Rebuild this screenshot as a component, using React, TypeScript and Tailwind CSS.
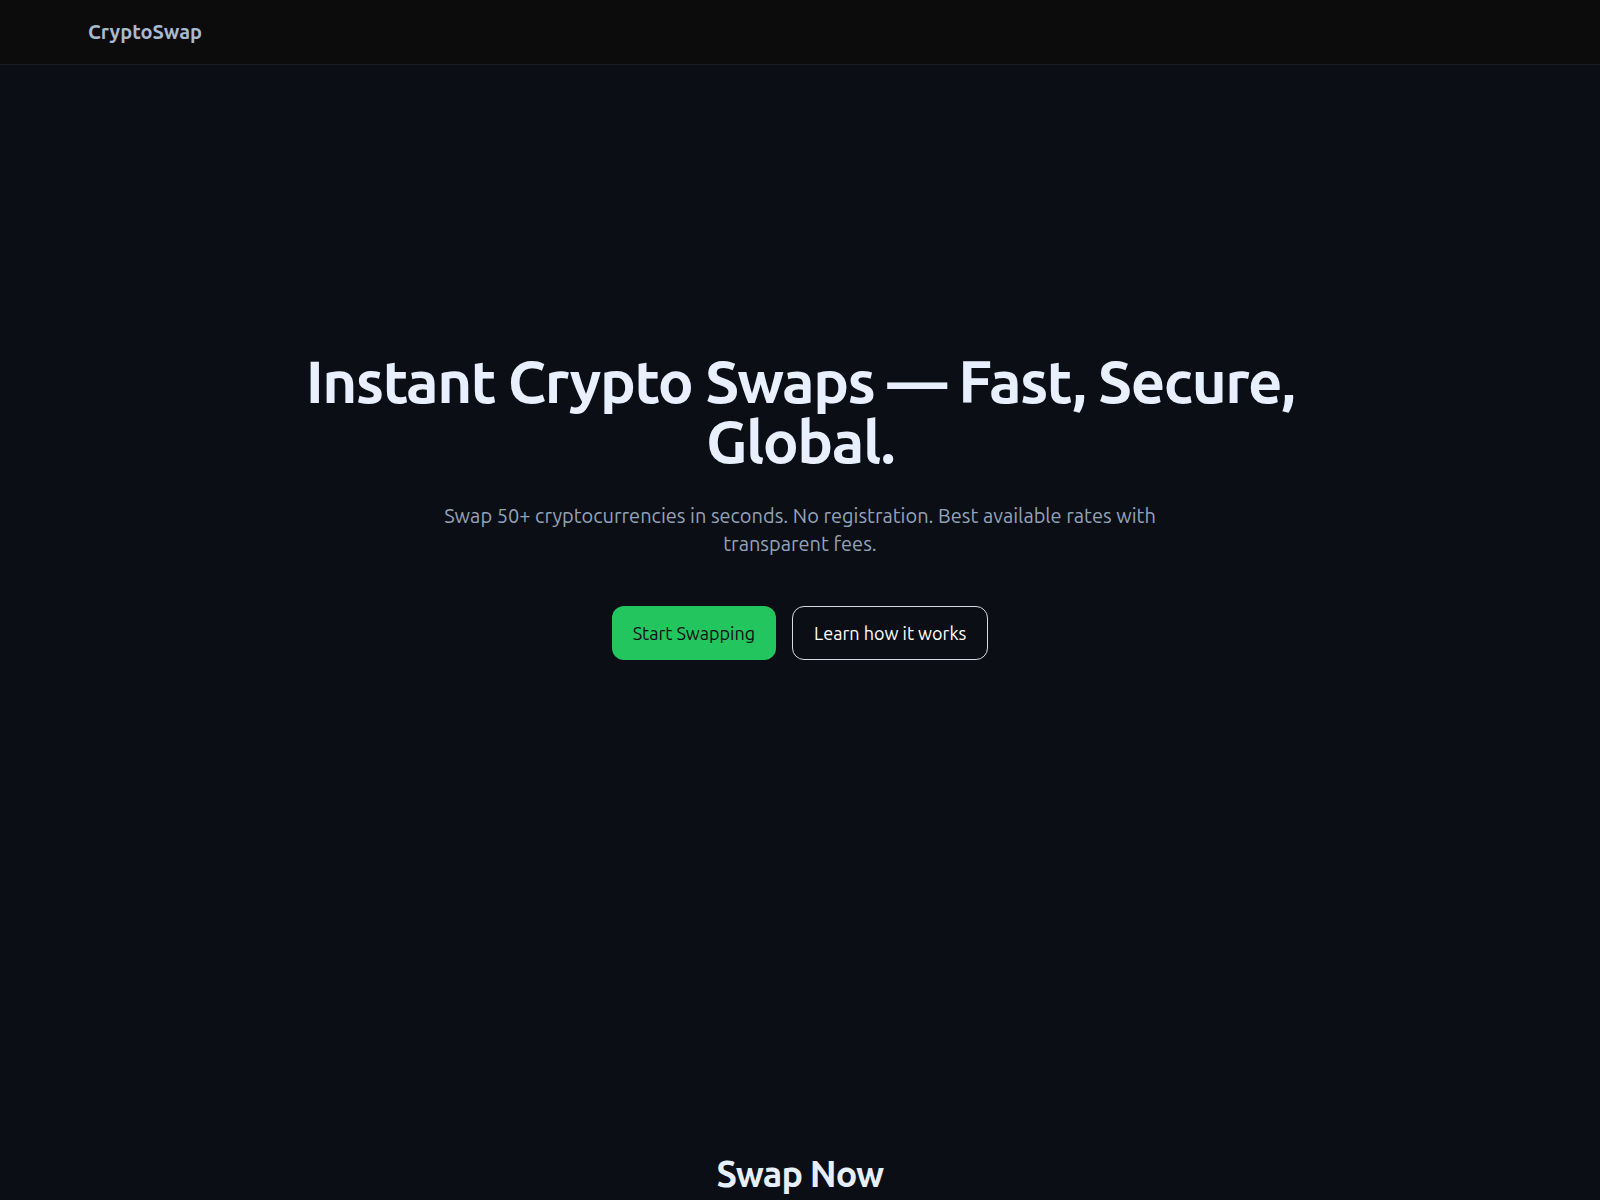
import React from 'react';

const font = { fontFamily: 'Ubuntu, "Open Sans", "Noto Sans", sans-serif' };

export default function App() {
  return (
    <div className="min-h-screen bg-[#0b0e14] text-[#e6efff]" style={font}>
      {/* Header */}
      <header className="h-[65px] bg-[#0c0c0c] border-b border-[#1b1e23]">
        <div className="h-full px-[88px] flex items-center">
          <span className="text-xl font-semibold text-[#a9b9cf]">CryptoSwap</span>
        </div>
      </header>

      {/* Hero */}
      <section className="min-h-[880px] flex items-center justify-center px-6">
        <div className="max-w-5xl flex flex-col items-center text-center">
          <h1 className="text-6xl leading-none font-semibold tracking-tight text-[#e8f0ff]">
            Instant Crypto Swaps — Fast, Secure, Global.
          </h1>
          <p className="mt-[31px] max-w-3xl text-xl text-[#94a3b8]">
            Swap 50+ cryptocurrencies in seconds. No registration. Best available rates with transparent fees.
          </p>
          <div className="mt-12 flex items-center gap-4">
            <button className="h-[54px] px-[21px] rounded-xl bg-[#22c55e] text-lg text-[#0b0e14]">
              Start Swapping
            </button>
            <button className="h-[54px] px-[21px] rounded-xl border border-[#d5dbe3] text-lg text-white">
              Learn how it works
            </button>
          </div>
        </div>
      </section>

      {/* Swap */}
      <section className="pt-[209px] pb-20 flex justify-center">
        <h2 className="text-4xl font-semibold tracking-tight text-[#e6efff]">Swap Now</h2>
      </section>
    </div>
  );
}
